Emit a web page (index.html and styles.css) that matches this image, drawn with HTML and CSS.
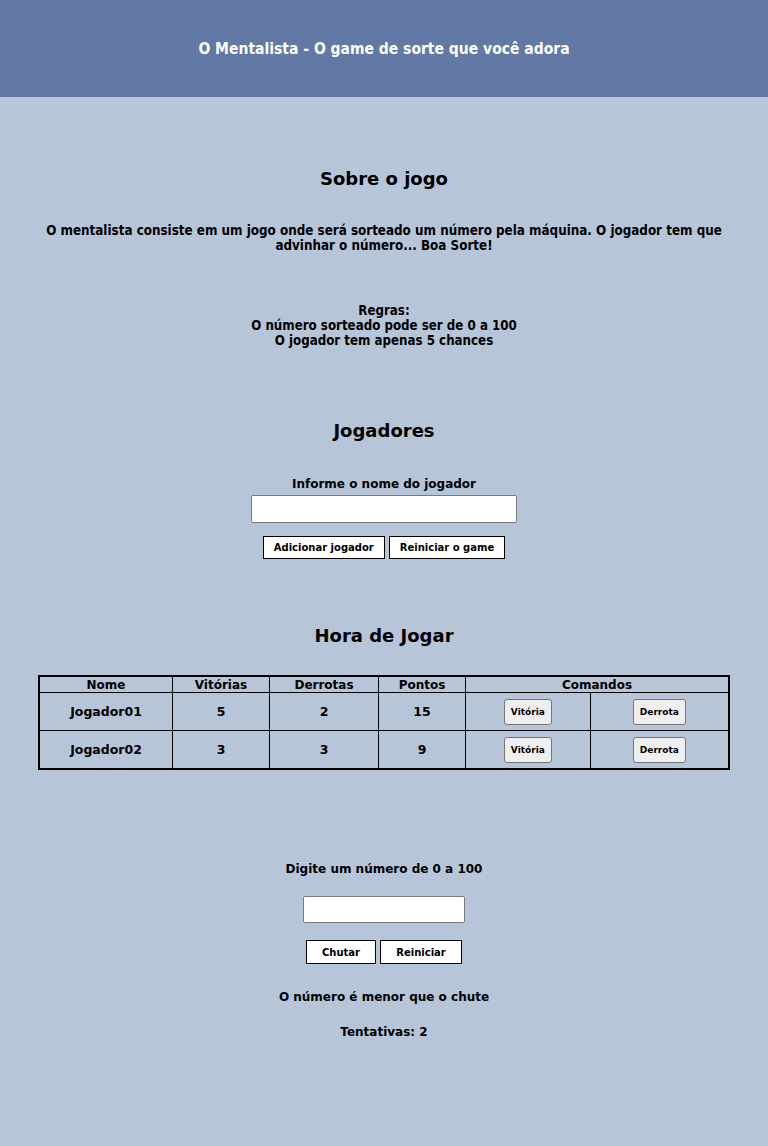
FILE: index.html
```html
<!DOCTYPE html>
<html lang="pt-BR">
<head>
<meta charset="utf-8">
<title>O Mentalista</title>
<link rel="stylesheet" href="styles.css">
</head>
<body>
<header class="topo">
  <h1 class="titulo">O Mentalista - O game de sorte que você adora</h1>
</header>
<main class="conteudo">
  <section class="sobre">
    <h2 class="secao-titulo">Sobre o jogo</h2>
    <p class="descricao">O mentalista consiste em um jogo onde será sorteado um número pela máquina. O jogador tem que advinhar o número... Boa Sorte!</p>
    <p class="regras">Regras:<br>O número sorteado pode ser de 0 a 100<br>O jogador tem apenas 5 chances</p>
  </section>
  <section class="jogadores">
    <h2 class="secao-titulo">Jogadores</h2>
    <label class="rotulo" for="nome">Informe o nome do jogador</label>
    <input class="campo campo-nome" id="nome" type="text">
    <div class="botoes">
      <button class="botao">Adicionar jogador</button>
      <button class="botao">Reiniciar o game</button>
    </div>
  </section>
  <section class="jogar">
    <h2 class="secao-titulo">Hora de Jogar</h2>
    <table class="tabela">
      <thead>
        <tr><th class="c-nome">Nome</th><th class="c-vit">Vitórias</th><th class="c-der">Derrotas</th><th class="c-pts">Pontos</th><th colspan="2">Comandos</th></tr>
      </thead>
      <tbody>
        <tr><td>Jogador01</td><td>5</td><td>2</td><td>15</td><td class="c-cmd"><button class="mini">Vitória</button></td><td class="c-cmd"><button class="mini">Derrota</button></td></tr>
        <tr><td>Jogador02</td><td>3</td><td>3</td><td>9</td><td class="c-cmd"><button class="mini">Vitória</button></td><td class="c-cmd"><button class="mini">Derrota</button></td></tr>
      </tbody>
    </table>
  </section>
  <section class="chute">
    <p class="rotulo-chute">Digite um número de 0 a 100</p>
    <input class="campo campo-numero" type="text">
    <div class="botoes botoes-chute">
      <button class="botao b-chutar">Chutar</button>
      <button class="botao b-reiniciar">Reiniciar</button>
    </div>
    <p class="mensagem">O número é menor que o chute</p>
    <p class="mensagem tentativas">Tentativas: 2</p>
  </section>
</main>
</body>
</html>
```
FILE: styles.css
```css
html, body {
  margin: 0;
  padding: 0;
}
body {
  background: #b7c5d9;
  color: #000;
  font-family: "DejaVu Sans", Verdana, sans-serif;
  font-weight: bold;
  min-height: 1146px;
}
.topo {
  background: #6279a5;
  height: 97px;
  display: flex;
  align-items: center;
  justify-content: center;
}
.titulo {
  margin: 0;
  color: #fff;
  font-family: "DejaVu Sans Condensed", "DejaVu Sans", sans-serif;
  font-stretch: condensed;
  font-size: 15.5px;
  font-weight: bold;
}
.conteudo {
  text-align: center;
}
.secao-titulo {
  font-size: 18px;
  margin: 0;
}
.sobre {
  padding-top: 71px;
}
.descricao {
  font-family: "DejaVu Sans Condensed", "DejaVu Sans", sans-serif;
  font-stretch: condensed;
  font-size: 13.3px;
  line-height: 15px;
  margin: 34px 40px 0;
}
.regras {
  font-family: "DejaVu Sans Condensed", "DejaVu Sans", sans-serif;
  font-stretch: condensed;
  font-size: 13.2px;
  line-height: 15px;
  margin: 50px 0 0;
}
.jogadores {
  padding-top: 72px;
  display: flex;
  flex-direction: column;
  align-items: center;
}
.rotulo {
  font-size: 12px;
  margin-top: 36px;
}
.campo {
  box-sizing: border-box;
  border: 1px solid #7a7a7a;
  background: #fff;
  border-radius: 2px;
}
.campo-nome {
  width: 266px;
  height: 28px;
  margin-top: 4px;
}
.botoes {
  display: flex;
  gap: 4px;
  justify-content: center;
  margin-top: 13px;
}
.botao {
  font-family: "DejaVu Sans", Verdana, sans-serif;
  font-weight: bold;
  font-size: 10px;
  background: #fff;
  border: 1px solid #000;
  height: 23px;
  padding: 0 10px;
}
.jogar {
  padding-top: 66px;
}
.tabela {
  margin: 29px auto 0;
  width: 692px;
  border-collapse: collapse;
  border: 2px solid #000;
  font-size: 12px;
}
.tabela th, .tabela td {
  border: 1px solid #000;
  padding: 0;
}
.tabela th {
  height: 15px;
}
.tabela td {
  height: 37px;
  font-size: 12.5px;
}
.c-nome { width: 132px; }
.c-vit { width: 96px; }
.c-der { width: 108px; }
.c-pts { width: 86px; }
.mini {
  font-family: "DejaVu Sans", Verdana, sans-serif;
  font-weight: bold;
  font-size: 9px;
  background: #efefef;
  border: 1px solid #767676;
  border-radius: 3px;
  height: 26px;
  padding: 0 6px;
}
.chute {
  padding-top: 92px;
  display: flex;
  flex-direction: column;
  align-items: center;
}
.rotulo-chute {
  font-size: 12px;
  margin: 0;
}
.campo-numero {
  width: 162px;
  height: 27px;
  margin-top: 20px;
}
.botoes-chute {
  margin-top: 17px;
}
.botoes-chute .botao {
  height: 24px;
}
.b-chutar { width: 70px; }
.b-reiniciar { width: 82px; }
.mensagem {
  font-size: 12px;
  margin: 26px 0 0;
}
.tentativas {
  margin-top: 21px;
}
```
